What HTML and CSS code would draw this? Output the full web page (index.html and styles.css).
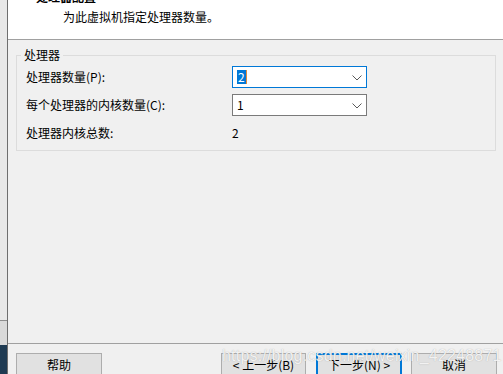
FILE: index.html
```html
<!DOCTYPE html>
<html lang="zh-CN">
<head>
<meta charset="utf-8">
<title>处理器配置</title>
<link rel="stylesheet" href="styles.css">
</head>
<body>
<div class="screen">
  <div class="side">
    <div class="side-top"></div>
    <div class="side-mid"></div>
    <div class="side-bottom"></div>
  </div>
  <div class="dialog">
    <div class="header">
      <div class="title">处理器配置</div>
      <div class="subtitle">为此虚拟机指定处理器数量。</div>
    </div>
    <div class="main">
      <fieldset class="group">
        <legend>处理器</legend>
        <div class="row">
          <span class="label">处理器数量(P):</span>
          <div class="combo focused">
            <span class="value"><span class="sel">2</span></span>
            <svg class="chev" width="10" height="6" viewBox="0 0 10 6"><path d="M0.5 0.5 L5 5 L9.5 0.5" fill="none" stroke="#5a5a5a" stroke-width="1"/></svg>
          </div>
        </div>
        <div class="row">
          <span class="label">每个处理器的内核数量(C):</span>
          <div class="combo">
            <span class="value">1</span>
            <svg class="chev" width="10" height="6" viewBox="0 0 10 6"><path d="M0.5 0.5 L5 5 L9.5 0.5" fill="none" stroke="#5a5a5a" stroke-width="1"/></svg>
          </div>
        </div>
        <div class="row">
          <span class="label">处理器内核总数:</span>
          <span class="total">2</span>
        </div>
      </fieldset>
    </div>
    <div class="footer">
      <button class="btn help">帮助</button>
      <div class="nav">
        <button class="btn">&lt; 上一步(B)</button>
        <button class="btn primary">下一步(N) &gt;</button>
        <button class="btn cancel">取消</button>
      </div>
      <div class="watermark">https://blog.csdn.net/weixin_42248871</div>
    </div>
  </div>
</div>
</body>
</html>
```

FILE: styles.css
```css
* { box-sizing: border-box; }
html, body { margin: 0; padding: 0; }
body {
  width: 503px;
  height: 374px;
  overflow: hidden;
  font-family: "Noto Sans CJK SC", "Noto Sans", sans-serif;
  font-size: 12px;
  color: #000;
  background: #f0f0f0;
}
.screen {
  display: flex;
  width: 503px;
  height: 374px;
  overflow: hidden;
}
.side {
  width: 8px;
  flex: none;
  display: flex;
  flex-direction: column;
  border-right: 1px solid #6e6e6e;
}
.side-top { height: 321px; background: #e8e8e8; border-bottom: 1px solid #8d8d8d; }
.side-mid { height: 24px; background: #d9d9d9; }
.side-bottom { flex: 1; background: #1e3a52; }

.dialog {
  flex: 1;
  display: flex;
  flex-direction: column;
  position: relative;
}
.header {
  height: 40px;
  background: #fff;
  border-bottom: 1px solid #a0a0a0;
  flex: none;
}
.title {
  font-weight: bold;
  line-height: 16px;
  margin-top: -11px;
  padding-left: 28px;
}
.subtitle {
  line-height: 16px;
  margin-top: 4px;
  padding-left: 55px;
}
.main {
  height: 304px;
  flex: none;
  padding: 7px 7px 0 8px;
  border-bottom: 1px solid #a0a0a0;
}
.group {
  margin: 0;
  border: 1px solid #dcdcdc;
  padding: 3px 9px 6px 9px;
  display: flex;
  flex-direction: column;
  gap: 6px;
}
.group legend {
  line-height: 16px;
  padding: 0 3px;
  margin-left: -5px;
}
.row {
  display: flex;
  align-items: center;
  height: 22px;
}
.label {
  width: 206px;
  line-height: 16px;
  flex: none;
}
.combo {
  width: 135px;
  height: 22px;
  border: 1px solid #7a7a7a;
  background: #fff;
  display: flex;
  align-items: center;
  justify-content: space-between;
  padding: 0 4px 0 3px;
}
.combo.focused { border-color: #0078d7; }
.value { line-height: 16px; padding-left: 1px; }
.sel {
  display: inline-block;
  background: #0078d7;
  color: #fff;
  line-height: 14px;
  padding: 0 1px;
  border-right: 1px solid #e08a3c;
}
.chev { display: block; margin-top: 1px; }
.total { line-height: 16px; }

.footer {
  flex: 1;
  display: flex;
  align-items: flex-start;
  padding: 9px 6px 0 8px;
  position: relative;
}
.nav {
  margin-left: auto;
  display: flex;
  gap: 9px;
}
.btn {
  font-family: inherit;
  font-size: 12px;
  height: 23px;
  width: 86px;
  background: #e1e1e1;
  border: 1px solid #adadad;
  color: #000;
  padding: 0;
  line-height: 16px;
  flex: none;
}
.nav .btn:first-child { width: 85px; margin-right: 1px; }
.btn.primary { border: 2px solid #0078d7; }
.watermark {
  position: absolute;
  left: 214px;
  top: 3px;
  font-family: "Liberation Sans", Arial, sans-serif;
  font-size: 16px;
  color: rgba(255,255,255,0.85);
  text-shadow: 0 0 1px rgba(120,120,120,0.6);
  letter-spacing: 0.2px;
  white-space: nowrap;
  pointer-events: none;
}
```
